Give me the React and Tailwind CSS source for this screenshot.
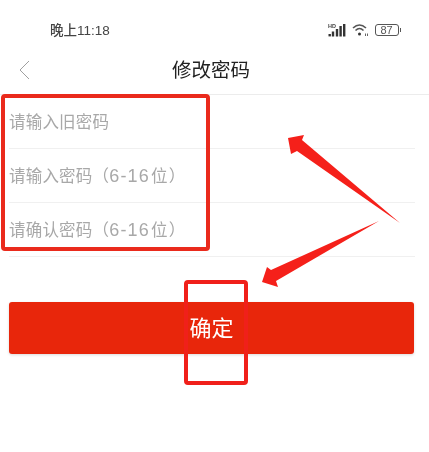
import clsx from "clsx";

const font = { fontFamily: '"Liberation Sans","Noto Sans CJK SC",sans-serif' };

function Row({ text, range }) {
  return (
    <div className={clsx("h-[54px] flex items-center border-b border-[#f0f0f0] ml-[9px] mr-[14px]", range ? "pt-0" : "pt-[2px]")}>
      <span className="text-[16.5px] text-[#a8a8a8] tracking-[0.2px] leading-none">
        {text}
        {range && (
          <>
            <span>（</span>
            <span className="text-[18px] tracking-[1.2px]">6-16</span>
            <span className="ml-[1px]">位</span>
            <span className="ml-[1px]">）</span>
          </>
        )}
      </span>
    </div>
  );
}

function StatusIcons() {
  return (
    <div className="flex items-center gap-[6px] mr-[28px] text-[#555]">
      <svg width="18" height="14" viewBox="0 0 18 14">
        <text x="0" y="5" fontSize="5.5" fontWeight="700" fill="#444" fontFamily="Liberation Sans">HD</text>
        <g fill="#333">
          <rect x="0.5" y="11" width="2.4" height="2.4" />
          <rect x="3.8" y="8.5" width="2.4" height="5" />
          <rect x="7.8" y="6" width="2.4" height="7.5" />
          <rect x="11.4" y="3" width="2.4" height="10.5" />
          <rect x="15" y="1" width="2.4" height="12.5" />
        </g>
      </svg>
      <svg width="17" height="14" viewBox="0 0 17 14" fill="none" stroke="#555" strokeWidth="1.6">
        <path d="M1 5 Q7.5 -1 14 5" />
        <path d="M3.5 7.5 Q7.5 3.5 11.5 7.5" />
        <circle cx="7.5" cy="11" r="1.5" fill="#333" stroke="none" />
        <path d="M13.5 10.5V13M15.5 10.5V13" strokeWidth="0.9" />
      </svg>
      <div className="flex items-center">
        <div className="w-[24px] h-[12px] rounded-[3px] border border-[#555] flex items-center justify-center text-[11px] leading-none text-[#555]">87</div>
        <div className="w-[1.5px] h-[4px] bg-[#555] ml-[1px]" />
      </div>
    </div>
  );
}

export default function App() {
  return (
    <div className="relative w-[429px] h-[452px] bg-white overflow-hidden blur-[0.4px]" style={font}>
      <div className="h-[60px] pt-[23px] flex justify-between items-start">
        <span className="ml-[50px] text-[13.5px] leading-[16px] font-medium text-[#444]">晚上11:18</span>
        <StatusIcons />
      </div>
      <div className="relative h-[35px] flex items-start justify-center border-b border-[#ececec]">
        <svg className="absolute left-[18px] top-0" width="14" height="20" viewBox="0 0 14 20" fill="none" stroke="#a0a0a0" strokeWidth="1">
          <path d="M11 1 L2 10 L11 19" />
        </svg>
        <span className="text-[19.5px] leading-[20px] text-[#222] -ml-[7px]">修改密码</span>
      </div>
      <Row text="请输入旧密码" />
      <Row text="请输入密码" range />
      <Row text="请确认密码" range />
      <button className="block mt-[45px] ml-[9px] w-[405px] h-[52px] rounded-[3px] bg-[#e8260b] text-white text-[22px] shadow-[0_1px_3px_rgba(0,0,0,0.15)]">确定</button>

      {/* annotations lying over the page */}
      <div className="absolute left-[1px] top-[94px] w-[209px] h-[157px] border-[4px] border-[#ea2a1c] rounded-[4px]" />
      <div className="absolute left-[184px] top-[280px] w-[64px] h-[105px] border-[4px] border-[#f0201a] rounded-[4px]" />
      <svg className="absolute left-0 top-0 pointer-events-none" width="429" height="452" viewBox="0 0 429 452">
        <polygon points="288,138 304,135 302,140 400,223 297,151 291,154" fill="#f5201a" />
        <polygon points="379,221 276,281 278,287 262,282 267,267 271,270" fill="#f5201a" />
      </svg>
    </div>
  );
}
